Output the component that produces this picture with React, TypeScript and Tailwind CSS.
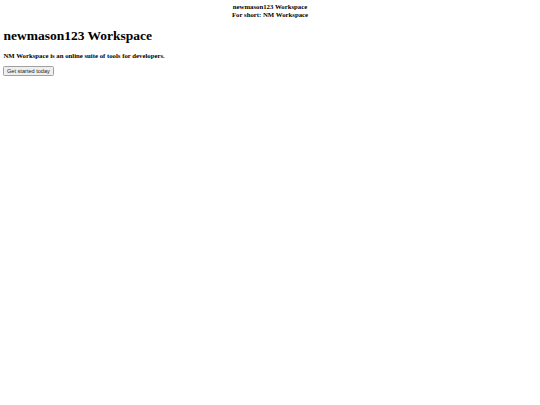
import React from "react";

export default function App() {
  return (
    <div className="min-h-[405px] w-[540px] bg-white p-[3.4px] text-black font-['Liberation_Serif',serif]">
      <div className="text-center text-[6.75px] font-bold leading-[7.8px]">
        <div>newmason123 Workspace</div>
        <div>For short: NM Workspace</div>
      </div>
      <h1 className="mt-[9px] mb-[9px] text-[13.5px] font-bold leading-[15.5px]">
        newmason123 Workspace
      </h1>
      <p className="text-[6.75px] font-bold leading-[7.8px]">
        NM Workspace is an online suite of tools for developers.
      </p>
      <div className="mt-[6px] flex">
        <button className="h-[10px] rounded-[1.5px] border-[0.5px] border-[#a0a0a0] bg-[#efefef] px-[2.6px] font-['Liberation_Sans',sans-serif] text-[5.6px] leading-[8px] text-[#222]">
          Get started today
        </button>
      </div>
    </div>
  );
}
